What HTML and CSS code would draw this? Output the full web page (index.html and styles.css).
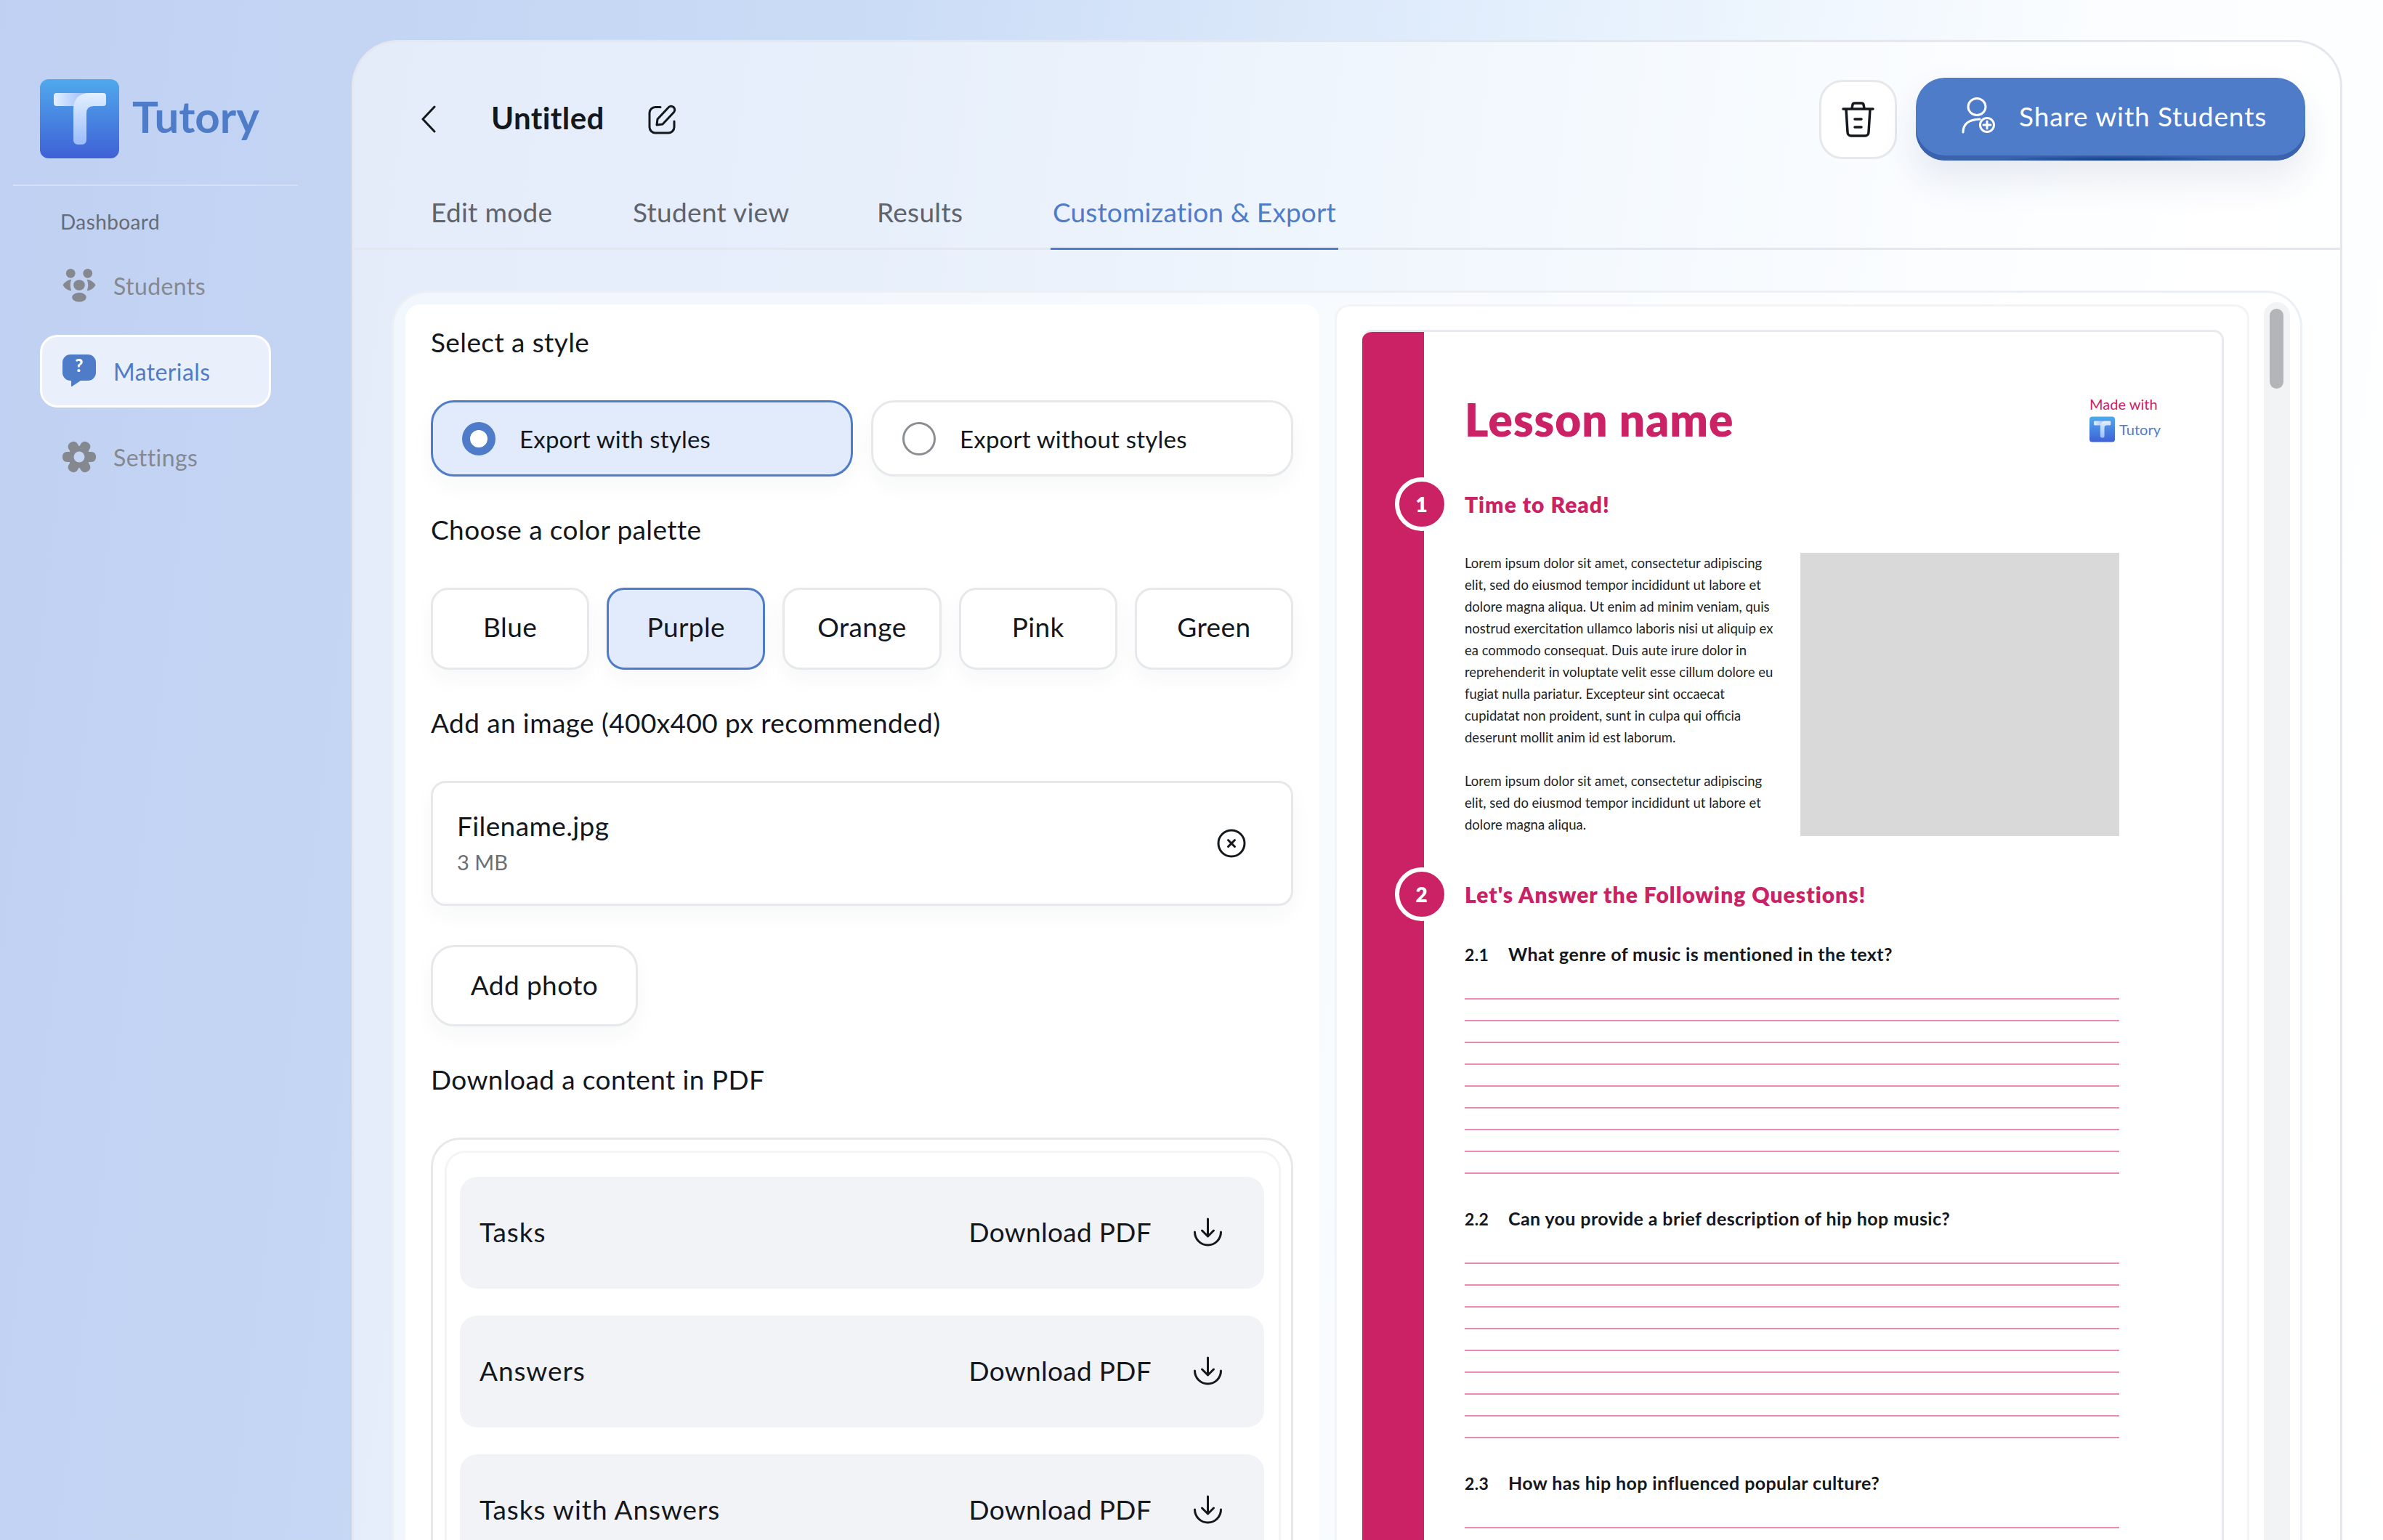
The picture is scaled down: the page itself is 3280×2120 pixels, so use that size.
FILE: index.html
```html
<!DOCTYPE html>
<html lang="en">

<head>
    <meta charset="utf-8">
    <title>Tutory</title>
    <link rel="stylesheet" href="styles.css">
</head>

<body>

    <svg class="defs" width="0" height="0">
        <defs>
            <linearGradient id="logoBg" x1="0" y1="0" x2="0" y2="1">
                <stop offset="0" stop-color="#50a9ec" />
                <stop offset="1" stop-color="#3f61d6" />
            </linearGradient>
            <linearGradient id="logoBar" x1="0" y1="0" x2="1" y2="0">
                <stop offset="0" stop-color="#e2efff" />
                <stop offset="1" stop-color="#93b6fb" />
            </linearGradient>
            <linearGradient id="logoStem" x1="0" y1="0" x2="0" y2="1">
                <stop offset="0" stop-color="#e2efff" />
                <stop offset="1" stop-color="#9cbdfd" />
            </linearGradient>
            <symbol id="logo" viewBox="0 0 109 109">
                <rect width="109" height="109" rx="12" fill="url(#logoBg)" />
                <rect x="19" y="19" width="50" height="18" rx="4" fill="url(#logoBar)" />
                <path d="M46 84V42Q46 19 69 19H87a4 4 0 0 1 4 4V33a4 4 0 0 1-4 4H74Q64 37 64 47V84a6 6 0 0 1-6 6H52a6 6 0 0 1-6-6z" fill="url(#logoStem)" />
            </symbol>
            <symbol id="download" viewBox="0 0 41 40">
                <path d="M20.5 2V26M12.5 18l8 8 8-8M2.5 20a18 18 0 0 0 36 0" fill="none" stroke="#14171c" stroke-width="3" stroke-linecap="round" stroke-linejoin="round" />
            </symbol>
        </defs>
    </svg>

    <div class="app">

        <aside class="sidebar">
            <div class="brand">
                <svg class="brand-logo"><use href="#logo" /></svg>
                <span class="brand-name">Tutory</span>
            </div>
            <div class="side-title">Dashboard</div>
            <nav class="side-nav">
                <a class="side-item">
                    <svg class="side-icon" viewBox="0 0 46 47" fill="#85898f">
                        <circle cx="11" cy="6.5" r="6.5" />
                        <circle cx="35" cy="6.5" r="6.5" />
                        <ellipse cx="23" cy="23" rx="8" ry="7.5" />
                        <path d="M12 15Q4 16 0 23Q4 30 12 31Q9 23 12 15z" />
                        <path d="M34 15Q42 16 46 23Q42 30 34 31Q37 23 34 15z" />
                        <ellipse cx="23" cy="40" rx="10" ry="6.5" />
                    </svg>
                    Students
                </a>
                <a class="side-item active">
                    <svg class="side-icon" viewBox="0 0 46 46">
                        <path d="M11 0H35a11 11 0 0 1 11 11V25a11 11 0 0 1-11 11H25L13 44Q12 44.500 12 43V36H11A11 11 0 0 1 0 25V11A11 11 0 0 1 11 0z" fill="#4f7cc9" />
                        <text x="23" y="24" class="icon-mark">?</text>
                    </svg>
                    Materials
                </a>
                <a class="side-item">
                    <svg class="side-icon" viewBox="0 0 46 46" fill="#85898f">
                        <rect y="16" width="46" height="14" rx="6" />
                        <rect y="16" width="46" height="14" rx="6" transform="rotate(60 23 23)" />
                        <rect y="16" width="46" height="14" rx="6" transform="rotate(120 23 23)" />
                        <circle cx="23" cy="23" r="15" />
                        <circle cx="23" cy="23" r="7.500" fill="#c5d6f4" />
                    </svg>
                    Settings
                </a>
            </nav>
        </aside>

        <main class="main">

            <div class="topbar">
                <svg class="back-icon" viewBox="0 0 20 38">
                    <path d="M18 2L2 19l16 17" fill="none" stroke="#14171c" stroke-width="3" stroke-linecap="round" stroke-linejoin="round" />
                </svg>
                <h1 class="doc-title">Untitled</h1>
                <svg class="edit-icon" viewBox="0 0 41 41" fill="none" stroke="#14171c" stroke-width="3" stroke-linecap="round" stroke-linejoin="round">
                    <path d="M18 3.500H11a8 8 0 0 0-8 8V31a8 8 0 0 0 8 8H29a8 8 0 0 0 8-8V23" />
                    <path d="M13 28l1-8L29 4a4.800 4.800 0 0 1 7.500 6.500L21 27z" />
                </svg>
                <div class="top-actions">
                    <button class="trash-btn">
                        <svg viewBox="0 0 45 49" fill="none" stroke="#14171c" stroke-width="3.500" stroke-linecap="round" stroke-linejoin="round">
                            <path d="M14 9L15 4Q15.500 2 18 2H27Q29.500 2 30 4L31 9M2 10H43M6 10L8 42a5 5 0 0 0 5 5H32a5 5 0 0 0 5-5L39 10M18 24H27M18 35H27" />
                        </svg>
                    </button>
                    <button class="share-btn">
                        <svg viewBox="0 0 46 50" fill="none" stroke="#fff" stroke-width="3" stroke-linecap="round">
                            <ellipse cx="21" cy="13" rx="12" ry="11.500" />
                            <path d="M2 48Q2 31 25 30" />
                            <circle cx="35" cy="38" r="9.500" />
                            <path d="M35 33V43M30 38H40" />
                        </svg>
                        Share with Students
                    </button>
                </div>
            </div>

            <div class="tabs">
                <a class="tab">Edit mode</a>
                <a class="tab">Student view</a>
                <a class="tab">Results</a>
                <a class="tab active">Customization &amp; Export</a>
            </div>

            <div class="content">
                <div class="panel">

                    <section class="options">
                        <div class="label first">Select a style</div>
                        <div class="radio-row">
                            <div class="radio selected"><span class="dot"></span>Export with styles</div>
                            <div class="radio"><span class="dot"></span>Export without styles</div>
                        </div>

                        <div class="label">Choose a color palette</div>
                        <div class="palette">
                            <div class="swatch">Blue</div>
                            <div class="swatch selected">Purple</div>
                            <div class="swatch">Orange</div>
                            <div class="swatch">Pink</div>
                            <div class="swatch">Green</div>
                        </div>

                        <div class="label">Add an image (400x400 px recommended)</div>
                        <div class="file-box">
                            <div>
                                <div class="file-name">Filename.jpg</div>
                                <div class="file-size">3 MB</div>
                            </div>
                            <svg class="file-remove" viewBox="0 0 40 40" fill="none" stroke="#14171c" stroke-width="3" stroke-linecap="round">
                                <circle cx="20" cy="20" r="18" />
                                <path d="M15.500 15.500L24.500 24.500M24.500 15.500L15.500 24.500" />
                            </svg>
                        </div>
                        <div class="add-photo">Add photo</div>

                        <div class="label">Download a content in PDF</div>
                        <div class="dl-outer">
                            <div class="dl-inner">
                                <div class="dl-row">
                                    <span class="dl-name">Tasks</span>
                                    <span>Download PDF</span>
                                    <svg class="dl-icon"><use href="#download" /></svg>
                                </div>
                                <div class="dl-row">
                                    <span class="dl-name">Answers</span>
                                    <span>Download PDF</span>
                                    <svg class="dl-icon"><use href="#download" /></svg>
                                </div>
                                <div class="dl-row">
                                    <span class="dl-name">Tasks with Answers</span>
                                    <span>Download PDF</span>
                                    <svg class="dl-icon"><use href="#download" /></svg>
                                </div>
                            </div>
                        </div>
                    </section>

                    <section class="preview">
                        <div class="sheet">
                            <div class="sheet-strip"></div>
                            <div class="sheet-body">

                                <div class="sheet-head">
                                    <div class="lesson">Lesson name</div>
                                    <div class="made-with">
                                        <div class="made-text">Made with</div>
                                        <div class="made-brand">
                                            <svg class="made-logo"><use href="#logo" /></svg>
                                            Tutory
                                        </div>
                                    </div>
                                </div>

                                <div class="sec-head read-head"><span class="sec-num">1</span>Time to Read!</div>
                                <div class="read-row">
                                    <p class="read-text">Lorem ipsum dolor sit amet, consectetur adipiscing<br>
                                        elit, sed do eiusmod tempor incididunt ut labore et<br>
                                        dolore magna aliqua. Ut enim ad minim veniam, quis<br>
                                        nostrud exercitation ullamco laboris nisi ut aliquip ex<br>
                                        ea commodo consequat. Duis aute irure dolor in<br>
                                        reprehenderit in voluptate velit esse cillum dolore eu<br>
                                        fugiat nulla pariatur. Excepteur sint occaecat<br>
                                        cupidatat non proident, sunt in culpa qui officia<br>
                                        deserunt mollit anim id est laborum.<br>
                                        <br>
                                        Lorem ipsum dolor sit amet, consectetur adipiscing<br>
                                        elit, sed do eiusmod tempor incididunt ut labore et<br>
                                        dolore magna aliqua.</p>
                                    <div class="read-image"></div>
                                </div>

                                <div class="sec-head answer-head"><span class="sec-num">2</span>Let's Answer the Following Questions!</div>

                                <div class="question first"><span class="q-num">2.1</span>What genre of music is mentioned in the text?</div>
                                <div class="lines">
                                    <i></i><i></i><i></i><i></i><i></i><i></i><i></i><i></i><i></i>
                                </div>

                                <div class="question"><span class="q-num">2.2</span>Can you provide a brief description of hip hop music?</div>
                                <div class="lines">
                                    <i></i><i></i><i></i><i></i><i></i><i></i><i></i><i></i><i></i>
                                </div>

                                <div class="question"><span class="q-num">2.3</span>How has hip hop influenced popular culture?</div>
                                <div class="lines">
                                    <i></i><i></i><i></i><i></i><i></i><i></i><i></i><i></i><i></i>
                                </div>

                            </div>
                        </div>
                    </section>

                    <div class="scroll-track">
                        <div class="scroll-thumb"></div>
                    </div>

                </div>
            </div>

        </main>
    </div>

</body>

</html>
```

FILE: styles.css
```css
* {
    box-sizing: border-box;
}

html,
body {
    margin: 0;
    height: 2120px;
    overflow: hidden;
}

body {
    font-family: "Lato", "Noto Sans", sans-serif;
    letter-spacing: 0.4px;
    color: #14171c;
    background: linear-gradient(97deg, #bfd0f2 0%, #cbdcf6 35%, #e6f1fd 62%, #fbfdff 82%, #ffffff 100%);
}

.defs {
    position: absolute;
}

.app {
    display: flex;
    height: 2120px;
}

/* sidebar */
.sidebar {
    width: 484px;
    flex: none;
    padding-top: 109px;
}

.brand {
    display: flex;
    align-items: center;
    margin: 0 74px 0 18px;
    padding: 0 0 36px 37px;
    border-bottom: 2px solid #d3e0f6;
}

.brand-logo {
    width: 109px;
    height: 109px;
}

.brand-name {
    margin-left: 18px;
    padding-bottom: 6px;
    font-size: 60px;
    font-weight: 700;
    line-height: 103px;
    letter-spacing: 0;
    color: #4f7cc9;
}

.side-title {
    margin: 29px 0 0 83px;
    font-size: 28px;
    line-height: 40px;
    color: #686c74;
}

.side-nav {
    display: flex;
    flex-direction: column;
    margin: 22px 0 0 55px;
    width: 318px;
}

.side-item {
    display: flex;
    align-items: center;
    gap: 24px;
    height: 100px;
    padding-left: 28px;
    font-size: 32px;
    color: #85898f;
    border: 3px solid transparent;
    border-radius: 24px;
}

.side-item:first-child {
    height: 92px;
    margin-bottom: 22px;
}

.side-item.active {
    margin-bottom: 18px;
    color: #4f7cc9;
    background: #e9effb;
    border-color: #fff;
}

.side-icon {
    width: 46px;
    height: 46px;
}

.icon-mark {
    font-size: 24px;
    font-weight: 900;
    fill: #fff;
    text-anchor: middle;
}

/* main panel */
.main {
    flex: 1;
    display: flex;
    flex-direction: column;
    margin: 55px 56px 0 0;
    overflow: hidden;
    background: rgba(255, 255, 255, 0.55);
    border: 3px solid #e4e8ee;
    border-bottom: none;
    border-radius: 64px 64px 0 0;
}

.topbar {
    display: flex;
    align-items: center;
    height: 163px;
    padding: 49px 48px 0 93px;
    flex: none;
}

.back-icon {
    width: 20px;
    height: 38px;
    margin-right: 76px;
}

.doc-title {
    width: 215px;
    margin: 0 0 4px;
    font-size: 42px;
    font-weight: 700;
}

.edit-icon {
    width: 41px;
    height: 41px;
}

.top-actions {
    display: flex;
    align-items: center;
    gap: 26px;
    margin-left: auto;
}

.trash-btn {
    display: flex;
    align-items: center;
    justify-content: center;
    width: 107px;
    height: 109px;
    padding: 0;
    background: #fff;
    border: 3px solid #e6e8eb;
    border-radius: 32px;
}

.trash-btn svg {
    width: 45px;
    height: 49px;
}

.share-btn {
    position: relative;
    display: flex;
    align-items: center;
    gap: 33px;
    width: 536px;
    height: 114px;
    padding: 0 0 10px 63px;
    font: inherit;
    font-size: 37px;
    letter-spacing: 0.9px;
    color: #fff;
    background: #4f7cc9;
    border: none;
    border-radius: 40px;
    box-shadow: inset 0 -7px 0 #3a62ad, 0 26px 50px rgba(40, 60, 110, 0.10);
}

.share-btn svg {
    width: 46px;
    height: 50px;
    flex: none;
}

.share-btn::after {
    content: "";
    position: absolute;
    left: 20%;
    right: 20%;
    bottom: 0;
    height: 7px;
    background: radial-gradient(ellipse 50% 100% at 50% 100%, #0d3a8a, rgba(13, 58, 138, 0));
}

.tabs {
    display: grid;
    grid-template-columns: 278px 336px 242px auto;
    justify-content: start;
    height: 123px;
    padding-left: 106px;
    flex: none;
    border-bottom: 3px solid #e4e8ee;
}

.tab {
    padding-top: 46px;
    font-size: 37px;
    line-height: 50px;
    letter-spacing: 0.3px;
    color: #5f646c;
}

.tab.active {
    margin: 0 0 -3px -3px;
    padding-left: 3px;
    padding-right: 3px;
    letter-spacing: 0.15px;
    color: #4f7cc9;
    border-bottom: 3px solid #4f7cc9;
}

.content {
    padding: 56px 52px 0;
}

.panel {
    display: flex;
    gap: 21px;
    padding: 16px 14px 0 16px;
    background: rgba(255, 255, 255, 0.5);
    border: 3px solid #eceff3;
    border-bottom: none;
    border-radius: 50px 50px 0 0;
}

/* left column */
.options {
    width: 1258px;
    flex: none;
    padding: 27px 36px 40px 35px;
    background: #fff;
    border-radius: 20px;
}

.label {
    margin: 48px 0 55px;
    font-size: 37px;
    line-height: 50px;
}

.label.first {
    margin-top: 0;
}

.radio-row {
    display: flex;
    gap: 25px;
}

.radio {
    display: flex;
    align-items: center;
    flex: 1;
    height: 105px;
    padding-left: 40px;
    font-size: 33px;
    letter-spacing: 0.2px;
    background: #fff;
    border: 3px solid #e6e8eb;
    border-radius: 32px;
    box-shadow: 0 12px 30px rgba(30, 40, 70, 0.04);
}

.radio .dot {
    width: 46px;
    height: 46px;
    margin-right: 33px;
    background: #fff;
    border: 3px solid #8a8d91;
    border-radius: 50%;
}

.radio.selected {
    background: #e1ebfb;
    border-color: #4f7cc9;
}

.radio.selected .dot {
    border: 11px solid #4f7cc9;
}

.palette {
    display: grid;
    grid-template-columns: repeat(5, 1fr);
    gap: 24px;
}

.swatch {
    display: flex;
    align-items: center;
    justify-content: center;
    height: 113px;
    padding-bottom: 6px;
    font-size: 37px;
    background: #fff;
    border: 3px solid #e6e8eb;
    border-radius: 24px;
    box-shadow: 0 12px 30px rgba(30, 40, 70, 0.04);
}

.swatch.selected {
    background: #e1ebfb;
    border-color: #4f7cc9;
}

.file-box {
    display: flex;
    align-items: center;
    justify-content: space-between;
    height: 172px;
    margin-top: 3px;
    padding: 0 62px 0 33px;
    border: 3px solid #e6e8eb;
    border-radius: 20px;
    box-shadow: 0 12px 30px rgba(30, 40, 70, 0.04);
}

.file-name {
    margin-top: -3px;
    font-size: 37px;
    line-height: 50px;
}

.file-size {
    margin-top: 5px;
    font-size: 29px;
    line-height: 40px;
    letter-spacing: 0;
    color: #6a6e75;
}

.file-remove {
    width: 40px;
    height: 40px;
}

.add-photo {
    display: flex;
    align-items: center;
    justify-content: center;
    width: 285px;
    height: 112px;
    margin-top: 54px;
    padding-bottom: 3px;
    font-size: 37px;
    border: 3px solid #e6e8eb;
    border-radius: 32px;
    box-shadow: 0 12px 30px rgba(30, 40, 70, 0.04);
}

.dl-outer {
    margin-top: 2px;
    padding: 15px 14px 0 16px;
    border: 3px solid #e6e8eb;
    border-bottom: none;
    border-radius: 40px 40px 0 0;
}

.dl-inner {
    display: flex;
    flex-direction: column;
    gap: 37px;
    padding: 33px 20px 0 18px;
    border: 3px solid #f3f4f6;
    border-bottom: none;
    border-radius: 28px 28px 0 0;
}

.dl-row {
    display: flex;
    align-items: center;
    height: 154px;
    padding: 0 57px 3px 27px;
    font-size: 37px;
    letter-spacing: 0.3px;
    background: #f2f3f6;
    border-radius: 24px;
}

.dl-name {
    margin-right: auto;
    letter-spacing: 0.9px;
}

.dl-icon {
    width: 41px;
    height: 40px;
    margin-left: 57px;
}

/* right column */
.preview {
    width: 1259px;
    flex: none;
    padding: 32px 32px 0 35px;
    background: #fff;
    border: 3px solid #f3f4f6;
    border-bottom: none;
    border-radius: 20px 20px 0 0;
}

.sheet {
    display: flex;
    overflow: hidden;
    background: #fff;
    border: 3px solid #e8eaed;
    border-left: none;
    border-bottom: none;
    border-radius: 14px 14px 0 0;
}

.sheet-strip {
    width: 85px;
    flex: none;
    background: #cb2265;
}

.sheet-body {
    flex: 1;
    padding: 80px 84px 0 56px;
}

.sheet-head {
    display: flex;
    justify-content: space-between;
    height: 80px;
}

.lesson {
    font-size: 62px;
    font-weight: 800;
    line-height: 80px;
    letter-spacing: 1px;
    color: #cb2265;
}

.made-with {
    margin-top: 5px;
    letter-spacing: 0;
}

.made-text {
    font-size: 20px;
    line-height: 28px;
    color: #cb2265;
}

.made-brand {
    display: flex;
    align-items: center;
    gap: 6px;
    margin-top: 3px;
    font-size: 20px;
    color: #4f7cc9;
}

.made-logo {
    width: 35px;
    height: 36px;
}

.sec-head {
    position: relative;
    font-size: 30px;
    font-weight: 800;
    line-height: 60px;
    letter-spacing: 1px;
    color: #cb2265;
}

.read-head {
    margin-top: 47px;
}

.answer-head {
    margin-top: 50px;
}

.sec-num {
    position: absolute;
    left: -96px;
    top: -7px;
    display: flex;
    align-items: center;
    justify-content: center;
    width: 74px;
    height: 74px;
    font-size: 28px;
    color: #fff;
    background: #cb2265;
    border: 6px solid #fff;
    border-radius: 50%;
}

.read-row {
    display: flex;
    margin-top: 36px;
}

.read-text {
    width: 462px;
    flex: none;
    margin: 0;
    font-size: 18.500px;
    line-height: 30px;
    letter-spacing: 0;
    white-space: nowrap;
    color: #1c1f24;
}

.read-image {
    width: 439px;
    height: 390px;
    margin-top: 1px;
    background: #d9d9d9;
}

.question {
    margin-top: 41px;
    font-size: 25px;
    font-weight: 700;
    line-height: 40px;
}

.question.first {
    margin-top: 32px;
}

.q-num {
    display: inline-block;
    width: 60px;
    font-size: 23px;
}

.lines {
    width: 901px;
    margin-top: 12px;
}

.lines i {
    display: block;
    height: 30px;
    border-bottom: 2px solid #ea8ab0;
}

.scroll-track {
    width: 36px;
    flex: none;
    height: 1800px;
    margin: -3px 0 0 -1px;
    padding: 9px 8px 0;
    background: #f2f3f5;
    border-radius: 18px 18px 0 0;
}

.scroll-thumb {
    width: 19px;
    height: 110px;
    background: #b3b5b8;
    border-radius: 10px;
}
```
